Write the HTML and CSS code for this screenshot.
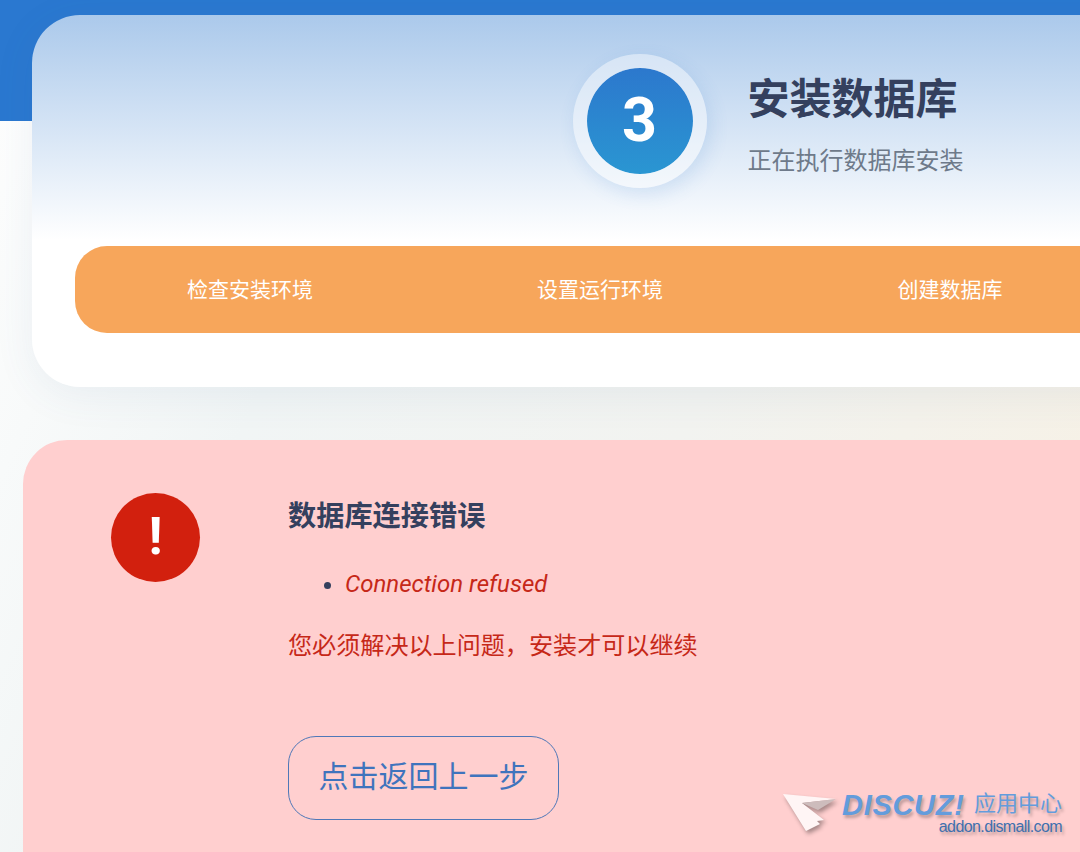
FILE: index.html
```html
<!DOCTYPE html>
<html lang="zh-CN">
<head>
    <meta charset="UTF-8">
    <meta name="viewport" content="width=device-width, initial-scale=1.0">
    <title>安装数据库</title>
    <link rel="stylesheet" href="styles.css">
</head>
<body>
    <div class="page">
        <div class="card">
            <div class="head">
                <div class="step-num">3</div>
                <div class="head-text">
                    <h1>安装数据库</h1>
                    <p>正在执行数据库安装</p>
                </div>
            </div>
            <div class="steps">
                <div class="step">检查安装环境</div>
                <div class="step">设置运行环境</div>
                <div class="step">创建数据库</div>
            </div>
        </div>

        <div class="error-box">
            <div class="error-icon">!</div>
            <div class="error-body">
                <h2>数据库连接错误</h2>
                <ul>
                    <li><em>Connection refused</em></li>
                </ul>
                <p>您必须解决以上问题，安装才可以继续</p>
                <a class="back-btn" href="#">点击返回上一步</a>
            </div>
        </div>
    </div>

    <div class="watermark">
        <svg class="wm-arrow" width="56" height="40" viewBox="0 0 56 40">
            <path d="M0 1 L53 6 L19 10 L41 27 L34 28 L37 31 L23 38 Z" fill="#fff5f5"/>
            <path d="M19 10 L53 6 L35 17 Z" fill="#cdbcbc"/>
        </svg>
        <div class="wm-text">
            <div class="wm-top"><span class="wm-brand">DISCUZ!</span><span class="wm-cn">应用中心</span></div>
            <div class="wm-url">addon.dismall.com</div>
        </div>
    </div>
</body>
</html>
```

FILE: styles.css
```css
html, body {
    margin: 0;
    padding: 0;
    height: 100%;
    overflow: hidden;
}

body {
    font-family: Roboto, "Noto Sans CJK SC", sans-serif;
    color: #34405e;
    background: linear-gradient(#2a78d0, #2a78d0) top left / 100% 121px no-repeat,
                linear-gradient(115deg, #fff 0, #f1f5f5 30%, #f2f3f0 60%, #f6f1e6 90%);
}

.page {
    width: 1536px;
    padding: 15px 32px 0;
    box-sizing: border-box;
}

.card {
    width: 1472px;
    height: 372px;
    box-sizing: border-box;
    padding: 39px 43px 0;
    border-radius: 48px;
    background: linear-gradient(#abc9eb 0, #fff 225px);
    box-shadow: 0 8px 40px rgba(60, 100, 150, 0.08);
}

.head {
    display: flex;
    justify-content: center;
    align-items: center;
    gap: 41px;
}

.step-num {
    width: 106px;
    height: 106px;
    border: 14px solid rgba(255, 255, 255, 0.42);
    background: linear-gradient(#2c78cd, #2a96d2) padding-box;
    border-radius: 50%;
    color: #fff;
    font-size: 61px;
    font-weight: 700;
    line-height: 105px;
    text-align: center;
    box-shadow: 4px 6px 18px rgba(60, 130, 210, 0.16);
}

.head-text {
    padding-top: 6px;
}

.head-text h1 {
    margin: 0;
    font-size: 42px;
    line-height: 56px;
    font-weight: 700;
    color: #34405e;
}

.head-text p {
    margin: 17px 0 0;
    font-size: 24px;
    line-height: 32px;
    color: #6e7a8a;
}

.steps {
    display: flex;
    height: 87px;
    margin-top: 58px;
    background: #f7a65b;
    border-radius: 32px;
}

.step {
    flex: none;
    width: 350px;
    line-height: 89px;
    text-align: center;
    color: #fff;
    font-size: 21px;
}

.error-box {
    display: flex;
    width: 1490px;
    height: 480px;
    margin: 53px 0 0 -9px;
    background: #ffcfcf;
    border-radius: 44px;
    padding: 53px 0 0 88px;
    box-sizing: border-box;
}

.error-icon {
    width: 89px;
    height: 89px;
    border-radius: 50%;
    background: #d2200e;
    color: #fff;
    font-size: 52px;
    font-weight: 700;
    line-height: 87px;
    text-align: center;
    flex-shrink: 0;
}

.error-body {
    margin-left: 88px;
}

.error-body h2 {
    margin: 1px 0 0;
    font-size: 28.2px;
    line-height: 46px;
    font-weight: 700;
}

.error-body ul {
    margin: 26px 0 0;
    padding-left: 57px;
    font-size: 24px;
    line-height: 36px;
}

.error-body em {
    color: #c62818;
}

.error-body p {
    margin: 26px 0 0;
    font-size: 24.1px;
    line-height: 36px;
    color: #c62818;
}

.back-btn {
    display: block;
    width: 271px;
    height: 84px;
    margin-top: 72px;
    box-sizing: border-box;
    border: 1.5px solid #4f78b8;
    border-radius: 28px;
    color: #3f74bd;
    font-size: 30px;
    line-height: 79px;
    text-align: center;
    text-decoration: none;
}

.watermark {
    position: absolute;
    left: 783px;
    top: 793px;
    display: flex;
    gap: 3px;
}

.wm-arrow {
    display: block;
    filter: drop-shadow(2px 3px 2px rgba(0, 0, 0, 0.35));
}

.wm-text {
    width: 220px;
    text-shadow: 2px 3px 3px rgba(0, 0, 0, 0.25);
    line-height: 1;
}

.wm-top {
    display: flex;
    align-items: flex-start;
    justify-content: space-between;
    height: 23px;
}

.wm-brand {
    font-family: "Liberation Sans", sans-serif;
    font-style: italic;
    font-weight: 700;
    font-size: 29px;
    letter-spacing: 0.7px;
    line-height: 24px;
    color: #639cdc;
}

.wm-cn {
    font-size: 22px;
    line-height: 22px;
    color: #639cdc;
}

.wm-url {
    font-family: "Liberation Sans", sans-serif;
    font-size: 16px;
    letter-spacing: -0.6px;
    color: #3f70ae;
    text-align: right;
    margin-top: 3px;
}
```
